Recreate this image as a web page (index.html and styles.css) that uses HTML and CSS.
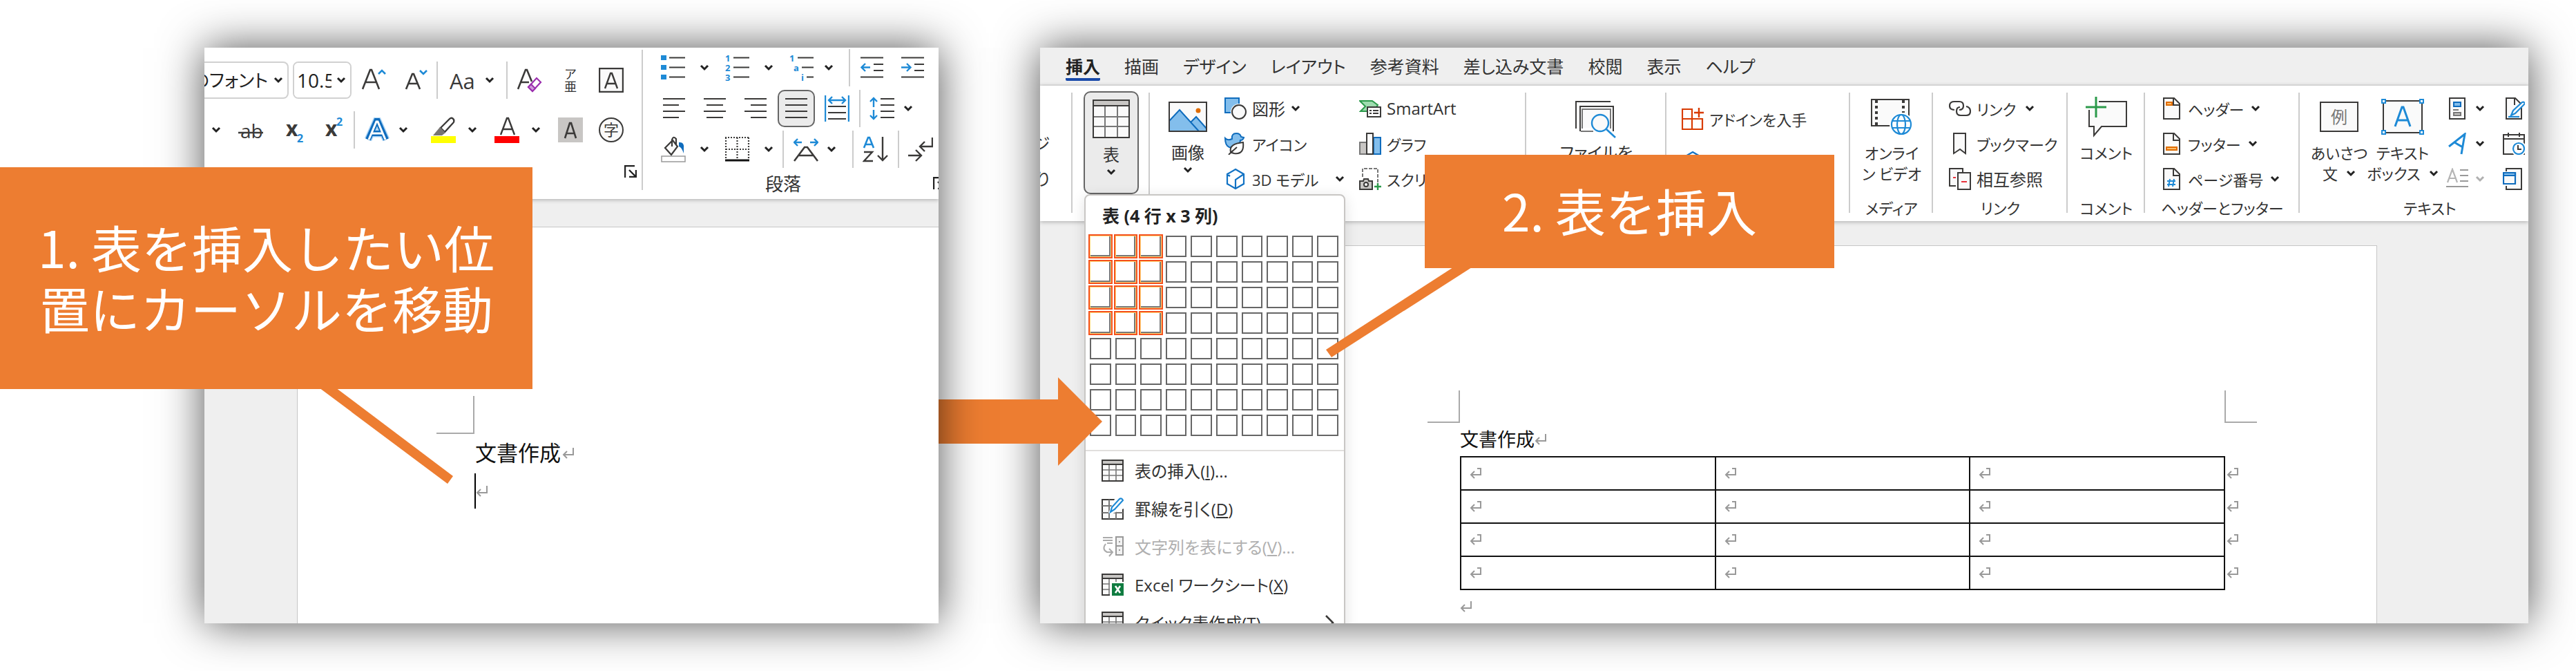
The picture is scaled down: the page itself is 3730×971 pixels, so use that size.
FILE: index.html
```html
<!DOCTYPE html>
<html lang="ja">
<head>
<meta charset="utf-8">
<title>表の挿入手順</title>
<link rel="stylesheet" href="styles.css">
</head>
<body>
<svg class="defs" aria-hidden="true">
  <symbol id="chev" viewBox="0 0 14 10"><path d="M2 2l5 5 5-5" fill="none" stroke="currentColor" stroke-width="3"/></symbol>
  <symbol id="mark" viewBox="0 0 18 18"><path d="M16 1v10H2M7 6l-5 5 5 5" fill="none" stroke="currentColor" stroke-width="2"/></symbol>
  <symbol id="cellmark" viewBox="0 0 18 18"><path d="M11 2h5v9H2M7 6l-5 5 5 5" fill="none" stroke="currentColor" stroke-width="2"/></symbol>
  <symbol id="launch" viewBox="0 0 18 18"><path d="M1 18V1h14M7 7l9 9M17 7v10H7" fill="none" stroke="#222" stroke-width="2.4"/></symbol>
  <symbol id="grid" viewBox="0 0 32 32"><path d="M1 1h30v30H1z" fill="#fafafa"/><path d="M1 1h30v6H1z" fill="#c8c6c4"/><path d="M11 7v24M21 7v24M1 15h30M1 23h30" stroke="#777" stroke-width="1.6"/><path d="M1 1h30v30H1zM1 7h30" fill="none" stroke="#3b3a39" stroke-width="2"/></symbol>
  <symbol id="page" viewBox="0 0 26 32"><path d="M1 1h15l8 8v22H1z" fill="#fafafa" stroke="#3b3a39" stroke-width="2"/><path d="M15 1v10h10" fill="none" stroke="#3b3a39" stroke-width="2"/></symbol>
</svg>

<main class="stage">
  <section class="shot shot-left">
    <div class="window">
      <div class="ribbon ribbon-home">
        <div class="font-group">
          <div class="font-row font-row-1">
            <div class="combo combo-name"><select aria-label="フォント"><option>のフォント</option></select><svg class="chev"><use href="#chev"/></svg></div>
            <div class="combo combo-size"><select aria-label="フォント サイズ"><option>10.5</option></select><svg class="chev"><use href="#chev"/></svg></div>
            <button aria-label="フォントの拡大"><svg width="36" height="36" viewBox="0 0 36 36"><path d="M1 31L12 3h2l11 28M5 21h16" fill="none" stroke="#3b3a39" stroke-width="2.6"/><path d="M24 9l5-5 5 5" fill="none" stroke="#1e8ad6" stroke-width="2.6"/></svg></button>
            <button aria-label="フォントの縮小"><svg width="36" height="36" viewBox="0 0 36 36"><path d="M3 31l9-22h2l9 22M6 23h14" fill="none" stroke="#3b3a39" stroke-width="2.6"/><path d="M23 4l5 5 5-5" fill="none" stroke="#1e8ad6" stroke-width="2.6"/></svg></button>
            <i class="sep"></i>
            <button aria-label="文字種の変換"><svg width="38" height="36" viewBox="0 0 38 36"><text x="0" y="31" font-size="31" fill="#3b3a39">Aa</text></svg><svg class="chev"><use href="#chev"/></svg></button>
            <i class="sep"></i>
            <button aria-label="書式のクリア"><svg width="36" height="36" viewBox="0 0 36 36"><path d="M1 31L12 3h2l7 17M5 21h12" fill="none" stroke="#3b3a39" stroke-width="2.6"/><path d="M16 28l6 6 12-13-6-6z" fill="#fff" stroke="#9b2fae" stroke-width="2.2"/><path d="M16 28l4-4 6 6-4 4z" fill="#cf9bdb" stroke="#9b2fae" stroke-width="2"/></svg></button>
            <button aria-label="ルビ" class="ruby"><span>ア</span><span>亜</span></button>
            <button aria-label="囲み線"><svg width="36" height="36" viewBox="0 0 36 36"><path d="M1 1h34v34H1z" fill="#fafafa" stroke="#3b3a39" stroke-width="2.4"/><path d="M9 30l8-22h2l8 22M12 23h12" fill="none" stroke="#3b3a39" stroke-width="2.4"/></svg></button>
          </div>
          <div class="font-row font-row-2">
            <button aria-label="下線の種類"><svg class="chev"><use href="#chev"/></svg></button>
            <button aria-label="取り消し線"><svg width="36" height="36" viewBox="0 0 36 36"><text x="3" y="30" font-size="28" fill="#3b3a39">ab</text><path d="M0 22h36" stroke="#3b3a39" stroke-width="2.4"/></svg></button>
            <button aria-label="下付き"><svg width="26" height="38" viewBox="0 0 26 38"><text x="0" y="28" font-size="30" font-weight="700" fill="#3b3a39">x</text><text x="16" y="37" font-size="16" font-weight="700" fill="#1e8ad6">2</text></svg></button>
            <button aria-label="上付き"><svg width="26" height="38" viewBox="0 0 26 38"><text x="0" y="28" font-size="30" font-weight="700" fill="#3b3a39">x</text><text x="16" y="13" font-size="16" font-weight="700" fill="#1e8ad6">2</text></svg></button>
            <i class="sep"></i>
            <button aria-label="文字の効果"><svg width="36" height="36" viewBox="0 0 36 36"><path d="M5 32L17 5h2l12 27M10 23h16" fill="none" stroke="#a9d3f5" stroke-width="11"/><path d="M5 32L17 5h2l12 27M10 23h16" fill="none" stroke="#0f6cbd" stroke-width="8"/><path d="M6 32L17 6h2l11 26M10 23h16" fill="none" stroke="#fff" stroke-width="3"/></svg><svg class="chev"><use href="#chev"/></svg></button>
            <button class="wide" aria-label="蛍光ペンの色"><svg width="36" height="38" viewBox="0 0 36 38"><path d="M14 16L27 3q3-3 6 1 1 3-1 5L20 22z" fill="#fff" stroke="#3b3a39" stroke-width="2.4"/><path d="M13 15l8 8-5 4H3z" fill="#777572"/><path d="M0 28h36v10H0z" fill="#ff0"/></svg><svg class="chev"><use href="#chev"/></svg></button>
            <button class="wide" aria-label="フォントの色"><svg width="36" height="38" viewBox="0 0 36 38"><path d="M9 26l9-24h2l9 24M12 18h14" fill="none" stroke="#3b3a39" stroke-width="2.4"/><path d="M0 28h36v10H0z" fill="red"/></svg><svg class="chev"><use href="#chev"/></svg></button>
            <button aria-label="文字の網かけ"><svg width="36" height="36" viewBox="0 0 36 36"><path d="M0 0h36v36H0z" fill="#c8c6c4"/><path d="M10 30l7-22h2l7 22M13 23h11" fill="none" stroke="#3b3a39" stroke-width="2.6"/></svg></button>
            <button aria-label="囲い文字"><svg width="36" height="36" viewBox="0 0 36 36"><circle cx="18" cy="18" r="17" fill="#fafafa" stroke="#3b3a39" stroke-width="2"/><text x="18" y="26" font-size="22" text-anchor="middle" fill="#3b3a39">字</text></svg></button>
          </div>
          <button class="launcher" aria-label="フォントの設定"><svg width="18" height="18"><use href="#launch"/></svg></button>
        </div>

        <div class="para-group">
          <div class="para-row para-row-1">
            <button aria-label="箇条書き"><svg width="36" height="38" viewBox="0 0 36 38"><path d="M0 1h8v7H0zM0 15h8v7H0zM0 29h8v7H0z" fill="#1e8ad6"/><path d="M12 4.500h23M12 18.500h23M12 32.500h23" stroke="#3b3a39" stroke-width="2.200"/></svg><svg class="chev"><use href="#chev"/></svg></button>
            <button aria-label="段落番号"><svg width="36" height="38" viewBox="0 0 36 38"><g font-size="13" font-weight="700" fill="#1e8ad6"><text x="0" y="10">1</text><text x="0" y="24">2</text><text x="0" y="38">3</text></g><path d="M12 4.500h23M12 18.500h23M12 32.500h23" stroke="#3b3a39" stroke-width="2.200"/></svg><svg class="chev"><use href="#chev"/></svg></button>
            <button class="snug" aria-label="アウトライン"><svg width="36" height="38" viewBox="0 0 36 38"><g font-size="13" font-weight="700" fill="#1e8ad6"><text x="0" y="10">1</text><text x="6" y="24">a</text><text x="17" y="38">i</text></g><path d="M12 4.500h23M18 18.500h17M25 32.500h10" stroke="#3b3a39" stroke-width="2.200"/></svg><svg class="chev"><use href="#chev"/></svg></button>
            <i class="sep"></i>
            <button aria-label="インデントを減らす"><svg width="34" height="38" viewBox="0 0 34 38"><path d="M0 4.500h33M19 14h14M19 23h14M0 32.500h33" stroke="#3b3a39" stroke-width="2.200"/><path d="M14 18.500H2M7 13l-5.500 5.500L7 24" fill="none" stroke="#1e8ad6" stroke-width="2.400"/></svg></button>
            <button aria-label="インデントを増やす"><svg width="34" height="38" viewBox="0 0 34 38"><path d="M0 4.500h33M19 14h14M19 23h14M0 32.500h33" stroke="#3b3a39" stroke-width="2.200"/><path d="M0 18.500h13M8 13l5.500 5.500L8 24" fill="none" stroke="#1e8ad6" stroke-width="2.400"/></svg></button>
          </div>
          <div class="para-row para-row-2">
            <button aria-label="左揃え"><svg width="36" height="34" viewBox="0 0 36 34"><path d="M3 3h32M3 12h23M3 21h32M3 30h23" stroke="#3b3a39" stroke-width="2.200"/></svg></button>
            <button aria-label="中央揃え"><svg width="36" height="34" viewBox="0 0 36 34"><path d="M3 3h32M7 12h24M3 21h32M7 30h24" stroke="#3b3a39" stroke-width="2.200"/></svg></button>
            <button aria-label="右揃え"><svg width="36" height="34" viewBox="0 0 36 34"><path d="M3 3h32M12 12h23M3 21h32M12 30h23" stroke="#3b3a39" stroke-width="2.200"/></svg></button>
            <button class="pressed" aria-label="両端揃え" aria-pressed="true"><svg width="32" height="34" viewBox="0 0 32 34"><path d="M0 3h32M0 12h32M0 21h32M0 30h32" stroke="#3b3a39" stroke-width="2.200"/></svg></button>
            <button aria-label="均等割り付け"><svg width="36" height="38" viewBox="0 0 36 38"><path d="M1 0v38M35 0v38M7 7h22M11 2L6 7l5 5M25 2l5 5-5 5" fill="none" stroke="#1e8ad6" stroke-width="2.400"/><path d="M5 16h26M5 25h26M5 34h26" stroke="#3b3a39" stroke-width="2.200"/></svg></button>
            <i class="sep"></i>
            <button class="tight" aria-label="行と段落の間隔"><svg width="37" height="36" viewBox="0 0 37 36"><path d="M6 3v13M1 8l5-5 5 5M6 20v13M1 28l5 5 5-5" fill="none" stroke="#1e8ad6" stroke-width="2.400"/><path d="M16 4h20M16 13h20M16 22h20M16 31h20" stroke="#3b3a39" stroke-width="2.200"/></svg><svg class="chev"><use href="#chev"/></svg></button>
          </div>
          <div class="para-row para-row-3">
            <button aria-label="塗りつぶし"><svg width="36" height="38" viewBox="0 0 36 38"><path d="M6 17L17 6l7 9-9 12zM16 15V5q2-6 6-1v9" fill="#fafafa" stroke="#3b3a39" stroke-width="2.200"/><path d="M26 9q8-1 7 8v8q-3-9-7-10z" fill="#0f6cbd"/><path d="M1 29h34v8H1z" fill="#fff" stroke="#999" stroke-width="1.500"/></svg><svg class="chev"><use href="#chev"/></svg></button>
            <button aria-label="罫線"><svg width="36" height="38" viewBox="0 0 36 38"><path d="M0 2h35M1 2v30M34 2v30M17.500 2v30M1 19h34" fill="none" stroke="#3b3a39" stroke-width="2.200" stroke-dasharray="2 2"/><path d="M0 35h35" stroke="#111" stroke-width="3"/></svg><svg class="chev"><use href="#chev"/></svg></button>
            <i class="sep"></i>
            <button class="tight" aria-label="拡張書式"><svg width="36" height="38" viewBox="0 0 36 38"><path d="M12 9H2M6 4L1 9l5 5M24 9h10M30 4l5 5-5 5" fill="none" stroke="#1e8ad6" stroke-width="2.400"/><path d="M1 36l15-20h4l15 20M8 28h20" fill="none" stroke="#3b3a39" stroke-width="2.600"/></svg><svg class="chev"><use href="#chev"/></svg></button>
            <i class="sep"></i>
            <button aria-label="並べ替え"><svg width="38" height="38" viewBox="0 0 38 38"><path d="M2 17L8 2h2l6 15M4 12h10" fill="none" stroke="#1e8ad6" stroke-width="2.600"/><path d="M2 23h12L2 36h13M29 1v34M22 28l7 7 7-7" fill="none" stroke="#3b3a39" stroke-width="2.400"/></svg></button>
            <i class="sep"></i>
            <button aria-label="編集記号の表示"><svg width="36" height="38" viewBox="0 0 36 38"><path d="M35 2v13H18M24 8l-7 7 7 7M0 28h18M11 20l8 8-8 8" fill="none" stroke="#3b3a39" stroke-width="2.400"/></svg></button>
          </div>
          <div class="para-foot"><span>段落</span><button class="launcher-cut" aria-label="段落の設定"><svg width="18" height="18"><use href="#launch"/></svg></button></div>
        </div>
      </div>
      <div class="desk desk-left">
        <div class="paper paper-left">
          <div class="corner"></div>
          <p class="para">文書作成<svg class="mark"><use href="#mark"/></svg></p>
          <p class="para caret"><svg class="mark"><use href="#mark"/></svg></p>
        </div>
      </div>
    </div>
    <svg class="pointer pointer-1" viewBox="0 0 200 140" aria-hidden="true"><path d="M0 0h24l170 128-8 11z" fill="#ed7d31"/></svg>
    <p class="callout callout-1">1. 表を挿入したい位置にカーソルを移動</p>
  </section>

  <section class="shot shot-right">
    <div class="window">
      <nav class="tabs">
        <a href="#" class="on">挿入</a><a href="#">描画</a><a href="#">デザイン</a><a href="#">レイアウト</a><a href="#">参考資料</a><a href="#">差し込み文書</a><a href="#">校閲</a><a href="#">表示</a><a href="#">ヘルプ</a>
      </nav>
      <div class="ribbon ribbon-insert">
        <div class="group g-cut"><span></span><span>ジ</span><span>り</span></div>
        <div class="group g-table">
          <button class="big pressed" aria-expanded="true"><span class="pic"><svg width="54" height="56" viewBox="0 0 54 56"><path d="M1 1h52v54H1z" fill="#fafafa"/><path d="M1 1h52v8H1z" fill="#c8c6c4"/><path d="M18 9v46M36 9v46M1 25h52M1 39h52" stroke="#777" stroke-width="2"/><path d="M1 1h52v54H1zM1 9h52" fill="none" stroke="#3b3a39" stroke-width="2"/></svg></span><span>表</span><svg class="chev"><use href="#chev"/></svg></button>
        </div>
        <div class="group g-figure">
          <button class="big"><span class="pic"><svg width="56" height="44" viewBox="0 0 56 44"><path d="M1 1h54v42H1z" fill="#fafafa"/><path d="M1 28l15-16 28 31H1z" fill="#83beec"/><path d="M32 30l8-8 15 17v4H45z" fill="#83beec"/><path d="M1 28l15-16 28 31M32 30l8-8 15 17" fill="none" stroke="#0f6cbd" stroke-width="2"/><circle cx="43" cy="13" r="3.500" fill="#e06c00"/><path d="M1 1h54v42H1z" fill="none" stroke="#3b3a39" stroke-width="2"/></svg></span><span>画像</span><svg class="chev"><use href="#chev"/></svg></button>
          <div class="rows rows-shape">
            <button><svg width="32" height="32" viewBox="0 0 32 32"><path d="M1 1h20v21H1z" fill="#83beec" stroke="#0f6cbd" stroke-width="2"/><circle cx="21" cy="21" r="12" fill="#fff"/><circle cx="21" cy="21" r="10" fill="#fafafa" stroke="#3b3a39" stroke-width="2"/></svg>図形<svg class="chev"><use href="#chev"/></svg></button>
            <button class="kana"><svg width="32" height="32" viewBox="0 0 32 32"><path d="M1 8q4 4 10 1Q10 1 17 1q6 0 7 5l4 1q-1 4-5 4 0 4-3 6-6 6-13 4Q1 19 1 8z" fill="#83beec" stroke="#0f6cbd" stroke-width="2"/><path d="M6 32l6-6M9 28q-3-12 18-14 2 18-13 16-4-1-5-2z" fill="#fff" stroke="#3b3a39" stroke-width="2"/><path d="M9 29l9-8" stroke="#3b3a39" stroke-width="2"/></svg>アイコン</button>
            <button class="far kana"><svg width="32" height="32" viewBox="0 0 32 32"><path d="M16 2l12 7v14l-12 7-12-7V9zM4 9l4 3M28 9l-12 8v13" fill="none" stroke="#1172c4" stroke-width="2.200"/></svg>3D モデル<svg class="chev"><use href="#chev"/></svg></button>
          </div>
          <div class="rows">
            <button><svg width="32" height="32" viewBox="0 0 32 32"><path d="M1 5h18l8 6-2 3H13v6H2l7-7z" fill="#9fdcb0" stroke="#2c9a4b" stroke-width="2"/><path d="M12 14h19v14H12z" fill="#fff" stroke="#3b3a39" stroke-width="2"/><path d="M15 19h3M20 19h8M15 23h3M20 23h8" stroke="#3b3a39" stroke-width="2"/></svg>SmartArt</button>
            <button class="kana"><svg width="32" height="32" viewBox="0 0 32 32"><path d="M1 14h10v17H1z" fill="#c8c6c4" stroke="#777" stroke-width="2"/><path d="M21 7h10v24H21z" fill="#83beec" stroke="#0f6cbd" stroke-width="2"/><path d="M11 1h9v30h-9z" fill="#fafafa" stroke="#3b3a39" stroke-width="2"/></svg>グラフ</button>
            <button class="kana"><svg width="32" height="32" viewBox="0 0 32 32"><path d="M5 13V1h22v20" fill="none" stroke="#777" stroke-width="2" stroke-dasharray="5 2"/><path d="M1 19h5l1-3h6l1 3h5v12H1z" fill="#c8c6c4" stroke="#3b3a39" stroke-width="2"/><circle cx="10" cy="24" r="3" fill="#fff" stroke="#3b3a39" stroke-width="2"/><path d="M27 22v10M22 27h10" stroke="#2c9a4b" stroke-width="2.400"/></svg>スクリーン</button>
          </div>
        </div>
        <div class="group g-file">
          <button class="big"><span class="pic"><svg width="60" height="62" viewBox="0 -8 60 62"><path d="M1 40V1h50M7 44V8h48v36" fill="none" stroke="#3b3a39" stroke-width="2"/><path d="M10 40V12h41v28M8 44h18" fill="none" stroke="#777" stroke-width="2"/><path d="M11 13h38v26H11z" fill="#fafafa"/><circle cx="36" cy="32" r="12" fill="#fafafa" stroke="#1e8ad6" stroke-width="2.400"/><path d="M45 41l13 12" stroke="#1e8ad6" stroke-width="2.600"/></svg></span><span>ファイルを</span></button>
        </div>
        <div class="group g-addin">
          <button class="kana"><svg width="32" height="32" viewBox="0 0 32 32"><path d="M1 2h14v29H1zM1 16h29v15H15" fill="none" stroke="#d83b01" stroke-width="2.200"/><path d="M25 0v14M18 7h14" stroke="#d83b01" stroke-width="2.400"/></svg>アドインを入手</button>
          <button class="kana" aria-label="個人用アドイン"><svg width="32" height="32" viewBox="0 0 32 32"><path d="M16 2l12 7v14l-12 7-12-7V9z" fill="none" stroke="#1172c4" stroke-width="2.200"/></svg></button>
        </div>
        <div class="group g-media">
          <button class="big kana"><span class="pic"><svg width="60" height="54" viewBox="0 0 60 54"><path d="M1 2h54v38H1z" fill="#fafafa" stroke="#3b3a39" stroke-width="2"/><path d="M8 3v37M47 3v18" stroke="#3b3a39" stroke-width="4" stroke-dasharray="4 4"/><circle cx="44" cy="38" r="17" fill="#fff"/><g fill="none" stroke="#1e8ad6" stroke-width="2.200"><circle cx="44" cy="38" r="14"/><ellipse cx="44" cy="38" rx="6" ry="14"/><path d="M31 33h26M31 43h26"/></g></svg></span><span>オンライ</span><span>ン ビデオ</span></button>
          <span class="label">メディア</span>
        </div>
        <div class="group g-link">
          <div class="rows">
            <button class="far kana"><svg width="32" height="32" viewBox="0 0 32 32"><g fill="none" stroke="#3b3a39" stroke-width="2.200"><path d="M8 18Q1 18 1 12t7-6h7q6 0 6 6t-6 6"/><path d="M16 14q-5 0-5 6t6 6h8q6 0 6-6t-6-7"/></g></svg>リンク<svg class="chev"><use href="#chev"/></svg></button>
            <button class="kana"><svg width="32" height="32" viewBox="0 0 32 32"><path d="M7 1h17v29l-8-6-9 6z" fill="#fafafa" stroke="#3b3a39" stroke-width="2"/></svg>ブックマーク</button>
            <button><svg width="32" height="32" viewBox="0 0 32 32"><path d="M10 26H1V1h19v5" fill="#fafafa" stroke="#3b3a39" stroke-width="2"/><path d="M13 7h18v24H13z" fill="#fafafa" stroke="#3b3a39" stroke-width="2"/><path d="M6 14h4M18 20h8" stroke="#e8323c" stroke-width="2.200"/></svg>相互参照</button>
          </div>
          <span class="label">リンク</span>
        </div>
        <div class="group g-comment">
          <button class="big kana"><span class="pic"><svg width="60" height="60" viewBox="0 0 60 60"><path d="M5 8h54v36H23L12 57V44H5z" fill="#fafafa" stroke="#3b3a39" stroke-width="2"/><path d="M0 0h19v20H0z" fill="#fff"/><path d="M15 1v30M0 16h30" stroke="#2c9a4b" stroke-width="3"/></svg></span><span>コメント</span></button>
          <span class="label">コメント</span>
        </div>
        <div class="group g-header">
          <div class="rows">
            <button class="kana"><svg width="26" height="32" viewBox="0 0 26 32"><use href="#page"/><path d="M5 7h8v4H5z" fill="#fbbc6a" stroke="#e06c00" stroke-width="2"/></svg>ヘッダー<svg class="chev"><use href="#chev"/></svg></button>
            <button class="kana"><svg width="26" height="32" viewBox="0 0 26 32"><use href="#page"/><path d="M5 21h15v4H5z" fill="#fbbc6a" stroke="#e06c00" stroke-width="2"/></svg>フッター<svg class="chev"><use href="#chev"/></svg></button>
            <button class="kana"><svg width="26" height="32" viewBox="0 0 26 32"><use href="#page"/><path d="M10 16l-2 11M16 16l-2 11M6 19h12M6 24h12" stroke="#1e8ad6" stroke-width="2"/></svg>ページ番号<svg class="chev"><use href="#chev"/></svg></button>
          </div>
          <span class="label">ヘッダーとフッター</span>
        </div>
        <div class="group g-text">
          <div class="text-body">
            <button class="big kana"><span class="pic"><svg width="56" height="44" viewBox="0 0 56 44"><path d="M1 1h54v42H1z" fill="#fafafa" stroke="#3b3a39" stroke-width="2"/><text x="28" y="31" font-size="24" text-anchor="middle" fill="#777">例</text></svg></span><span>あいさつ</span><span>文 <svg class="chev"><use href="#chev"/></svg></span></button>
            <button class="big kana"><span class="pic"><svg width="62" height="52" viewBox="0 0 62 52"><path d="M3 3h56v46H3z" fill="#fafafa" stroke="#3b3a39" stroke-width="2"/><path d="M20 40l10-28h2l10 28M24 31h14" fill="none" stroke="#1e8ad6" stroke-width="3"/><path d="M1 1h5v5H1zM56 1h5v5h-5zM1 46h5v5H1zM56 46h5v5h-5z" fill="#fff" stroke="#1e8ad6" stroke-width="2"/></svg></span><span>テキスト</span><span>ボックス <svg class="chev"><use href="#chev"/></svg></span></button>
            <div class="rows">
              <button aria-label="クイック パーツ"><svg width="32" height="32" viewBox="0 0 32 32"><path d="M5 1h22v30H5z" fill="#fafafa" stroke="#3b3a39" stroke-width="2"/><path d="M11 7h10v6H11z" fill="#83beec" stroke="#0f6cbd" stroke-width="2"/><path d="M10 18h8" stroke="#777" stroke-width="2"/><path d="M11 22h10v4H11z" fill="#c8c6c4" stroke="#777" stroke-width="2"/></svg><svg class="chev"><use href="#chev"/></svg></button>
              <button aria-label="ワードアート"><svg width="32" height="32" viewBox="0 0 32 32"><path d="M4 20L27 2l-5 29M12 14l12 7" fill="none" stroke="#1e8ad6" stroke-width="3"/></svg><svg class="chev"><use href="#chev"/></svg></button>
              <button aria-label="ドロップ キャップ" disabled><svg width="32" height="32" viewBox="0 0 32 32"><path d="M2 21L9 2l7 19M4 15h10" fill="none" stroke="#b5b5b5" stroke-width="2.200"/><path d="M20 3h12M20 11h12M20 19h12M0 27h32" stroke="#999" stroke-width="2.200"/></svg><svg class="chev"><use href="#chev"/></svg></button>
            </div>
            <div class="rows">
              <button aria-label="署名欄"><svg width="32" height="32" viewBox="0 0 32 32"><path d="M5 1h13l9 9v21H5zM17 1v10" fill="#fafafa" stroke="#3b3a39" stroke-width="2"/><path d="M12 26l3-7L28 7q3-1 4 2L18 23z" fill="#fff" stroke="#1e8ad6" stroke-width="2.200"/><path d="M8 28h16" stroke="#1e8ad6" stroke-width="2.200"/></svg></button>
              <button aria-label="日付と時刻"><svg width="32" height="32" viewBox="0 0 32 32"><path d="M1 3h30v28H1zM1 9h30M8 0v6M24 0v6" fill="#fafafa" stroke="#3b3a39" stroke-width="2"/><circle cx="23" cy="23" r="11" fill="#fff"/><circle cx="23" cy="23" r="8" fill="#fff" stroke="#1e8ad6" stroke-width="2.200"/><path d="M22 18v6h5" fill="none" stroke="#3b3a39" stroke-width="2"/></svg></button>
              <button aria-label="オブジェクト"><svg width="32" height="32" viewBox="0 0 32 32"><path d="M5 5V1h22v30H5v-5" fill="#fafafa" stroke="#3b3a39" stroke-width="2"/><path d="M1 7h17v16H1z" fill="#fafafa" stroke="#0f6cbd" stroke-width="2.200"/><path d="M1 7h17v4H1z" fill="#83beec" stroke="#0f6cbd" stroke-width="2.200"/></svg></button>
            </div>
          </div>
          <span class="label">テキスト</span>
        </div>
      </div>
      <div class="desk desk-right">
        <div class="paper paper-right">
          <div class="corners"><div class="corner"></div><div class="corner corner-r"></div></div>
          <p class="para">文書作成<svg class="mark"><use href="#mark"/></svg></p>
          <table class="doc-table">
            <tr><td><svg class="mark"><use href="#cellmark"/></svg></td><td><svg class="mark"><use href="#cellmark"/></svg></td><td><svg class="mark"><use href="#cellmark"/></svg></td><td class="end"><svg class="mark"><use href="#cellmark"/></svg></td></tr>
            <tr><td><svg class="mark"><use href="#cellmark"/></svg></td><td><svg class="mark"><use href="#cellmark"/></svg></td><td><svg class="mark"><use href="#cellmark"/></svg></td><td class="end"><svg class="mark"><use href="#cellmark"/></svg></td></tr>
            <tr><td><svg class="mark"><use href="#cellmark"/></svg></td><td><svg class="mark"><use href="#cellmark"/></svg></td><td><svg class="mark"><use href="#cellmark"/></svg></td><td class="end"><svg class="mark"><use href="#cellmark"/></svg></td></tr>
            <tr><td><svg class="mark"><use href="#cellmark"/></svg></td><td><svg class="mark"><use href="#cellmark"/></svg></td><td><svg class="mark"><use href="#cellmark"/></svg></td><td class="end"><svg class="mark"><use href="#cellmark"/></svg></td></tr>
          </table>
          <p class="para"><svg class="mark"><use href="#mark"/></svg></p>
        </div>
      </div>

      <div class="menu">
        <h2>表 (4 行 x 3 列)</h2>
        <div class="cells">
          <i class="hot"></i><i class="hot"></i><i class="hot"></i><i></i><i></i><i></i><i></i><i></i><i></i><i></i>
          <i class="hot"></i><i class="hot"></i><i class="hot"></i><i></i><i></i><i></i><i></i><i></i><i></i><i></i>
          <i class="hot"></i><i class="hot"></i><i class="hot"></i><i></i><i></i><i></i><i></i><i></i><i></i><i></i>
          <i class="hot"></i><i class="hot"></i><i class="hot"></i><i></i><i></i><i></i><i></i><i></i><i></i><i></i>
          <i></i><i></i><i></i><i></i><i></i><i></i><i></i><i></i><i></i><i></i>
          <i></i><i></i><i></i><i></i><i></i><i></i><i></i><i></i><i></i><i></i>
          <i></i><i></i><i></i><i></i><i></i><i></i><i></i><i></i><i></i><i></i>
          <i></i><i></i><i></i><i></i><i></i><i></i><i></i><i></i><i></i><i></i>
        </div>
        <div class="commands">
          <button><svg width="32" height="32"><use href="#grid"/></svg><span>表の挿入(<u>I</u>)...</span></button>
          <button><svg width="32" height="32" viewBox="0 0 32 32"><path d="M1 3h30v28H1z" fill="#fafafa" stroke="#3b3a39" stroke-width="2"/><path d="M11 3v28M21 16v15M1 12h17M1 22h30" stroke="#777" stroke-width="2"/><path d="M20 0h12v16L14 24l-4-2z" fill="#fff"/><path d="M13 21l2-7L26 2q3-2 5 2L19 17z" fill="#fff" stroke="#1e8ad6" stroke-width="2.200"/></svg><span>罫線を引く(<u>D</u>)</span></button>
          <button disabled><svg width="32" height="32" viewBox="0 0 32 32"><path d="M2 3h14M2 7h14M8 11h8" stroke="#aaa" stroke-width="2"/><path d="M6 12q-6 8 2 12h7M11 19l5 5-5 6" fill="none" stroke="#aaa" stroke-width="2"/><path d="M21 2h10v26H21zM21 15h10M25 9h2M25 21h2" fill="#f2f2f2" stroke="#999" stroke-width="2"/></svg><span>文字列を表にする(<u>V</u>)...</span></button>
          <button><svg width="32" height="32" viewBox="0 0 32 32"><use href="#grid"/><path d="M12 12h20v20H12z" fill="#fff"/><path d="M15 14h17v18H15z" fill="#107c41"/><path d="M20 18l7 10M27 18l-7 10" stroke="#fff" stroke-width="2.600"/></svg><span>Excel ワークシート(<u>X</u>)</span></button>
          <button><svg width="32" height="32"><use href="#grid"/></svg><span>クイック表作成(<u>T</u>)</span><svg class="more" width="14" height="24" viewBox="0 0 14 24"><path d="M2 2l10 10L2 22" fill="none" stroke="#3b3a39" stroke-width="2.600"/></svg></button>
        </div>
      </div>
    </div>
    <svg class="arrow" viewBox="0 0 237 128" aria-hidden="true"><path d="M0 32h173V0l64 64-64 64V96H0z" fill="#ed7d31"/></svg>
    <svg class="pointer pointer-2" viewBox="0 0 212 130" aria-hidden="true"><path d="M184 0h27L8 130l-8-11z" fill="#ed7d31"/></svg>
    <p class="callout callout-2">2. 表を挿入</p>
  </section>
</main>
</body>
</html>
```
FILE: styles.css
```css
* { box-sizing: border-box; }
body {
  margin: 0;
  background: #fff;
  color: #333;
  font-family: "Open Sans", "Noto Sans CJK JP", sans-serif;
  font-size: 24px;
  font-feature-settings: "palt";
}
p, h2 { margin: 0; }
svg { display: block; flex: none; }
.defs { position: absolute; width: 0; height: 0; }
button {
  display: flex;
  align-items: center;
  margin: 0;
  padding: 0;
  border: 0;
  background: none;
  color: inherit;
  font: inherit;
  font-feature-settings: inherit;
  white-space: nowrap;
}
button:disabled { color: #b0b0b0; }
.kana { font-size: 22px; }
.chev { width: 14px; height: 10px; color: #222; }
button:disabled .chev { color: #b0b0b0; }

/* Stage */
.stage {
  display: grid;
  grid-template-columns: minmax(0, 1063fr) minmax(0, 2155fr);
  column-gap: 147px;
  min-height: 100vh;
  padding: 69px 69px 69px 296px;
  overflow: hidden;
}
.shot { position: relative; }
.shot-left { z-index: 2; }
.shot-right { z-index: 1; }
.window {
  position: relative;
  display: flex;
  flex-direction: column;
  height: calc(100vh - 138px);
  overflow: hidden;
  background: #efefef;
  box-shadow: 0 0 60px rgba(0, 0, 0, .68);
}
.ribbon {
  display: flex;
  position: relative;
  background: #fff;
  box-shadow: 0 1px 6px rgba(0, 0, 0, .3);
}

/* Home ribbon */
.ribbon-home { flex: 0 0 219px; }
.font-group {
  flex: 0 0 635px;
  padding-top: 20px;
  background: linear-gradient(#ccc, #ccc) right 3px / 2px 203px no-repeat;
}
.font-row { display: grid; height: 54px; margin-bottom: 18px; }
.font-row-1 { grid-template-columns: 128px 85px 66px 56px 4px 97px 4px 62px 56px 62px; }
.font-row-2 { grid-template-columns: 34px 66px 61px 54px 4px 89px 107px 76px 78px 40px; }
.font-row button { justify-content: center; gap: 13px; }
.font-row .wide { gap: 17px; }
.sep { display: block; width: 2px; margin: 0 auto; background: #ccc; }
.para-row .sep { margin: 0; }
.combo {
  display: flex;
  align-items: center;
  position: relative;
  overflow: hidden;
  border: 2px solid #d1d1d1;
  border-radius: 8px;
}
.combo-name { margin-right: 6px; border-left: 0; border-radius: 0 8px 8px 0; }
.combo select {
  appearance: none;
  width: 100%;
  height: 100%;
  border: 0;
  background: #fff;
  color: #222;
  font: inherit;
  font-feature-settings: inherit;
}
.combo-name select { flex: 0 0 172px; margin-left: -58px; padding: 0 0 0 40px; font-size: 26px; }
.combo-size select { padding: 0 27px 0 4px; font-size: 28px; }
.combo .chev { position: absolute; right: 6px; }
.font-row .ruby {
  flex-direction: column;
  gap: 0;
  font-size: 18px;
  line-height: 18px;
}
.launcher { margin: 24px 9px 0 auto; }

.para-group { flex: 1 1 0; min-width: 0; padding: 2px 0 0 26px; }
.para-row { display: grid; height: 54px; margin-bottom: 5px; }
.para-row-1 { grid-template-columns: 93px 93px 86px 17px 59px 54px; }
.para-row-2 { grid-template-columns: 59px 59px 51px 68px 50px 15px 100px; }
.para-row-3 { grid-template-columns: 93px 83px 16px 85px 15px 51px 15px 44px; }
.para-row button { gap: 20px; }
.para-row .snug { gap: 14px; }
.para-row .tight { gap: 12px; }
.para-row .pressed { width: 54px; justify-content: center; }
.pressed { border: 2px solid #666; border-radius: 10px; background: #ebebeb; }
.para-foot {
  display: flex;
  justify-content: space-between;
  align-items: center;
  height: 34px;
  padding-left: 151px;
  font-size: 26px;
}
.launcher-cut { margin-right: -10px; }

/* Insert ribbon */
.tabs {
  display: flex;
  flex: 0 0 54px;
  gap: 35px;
  padding: 6px 0 5px 37px;
  border-bottom: 2px solid #e6e6e6;
  font-size: 25px;
}
.tabs a {
  height: 42px;
  color: #333;
  line-height: 42px;
  text-decoration: none;
  white-space: nowrap;
}
.tabs .on { border-bottom: 4px solid #1849a9; border-radius: 2px; color: #222; font-weight: 700; }
.ribbon-insert { flex: 0 0 196px; }
.group {
  display: flex;
  flex-direction: column;
  min-width: 0;
  padding-top: 7px;
  background: linear-gradient(#ccc, #ccc) right 10px / 2px 174px no-repeat;
}
.g-cut {
  flex: 0 0 47px;
  align-items: flex-start;
  padding-right: 33px;
  direction: rtl;
  overflow: hidden;
}
.g-cut span { height: 51px; line-height: 51px; }
.g-table { flex: 0 0 112px; padding: 8px 16px 0; }
.g-figure { flex: 0 0 545px; flex-direction: row; padding-left: 27px; }
.g-file { flex: 0 0 203px; align-items: center; }
.g-addin { flex: 0 0 266px; padding: 17px 0 0 22px; }
.g-addin button { height: 62px; gap: 8px; }
.g-media { flex: 0 0 120px; }
.g-link { flex: 0 0 195px; }
.g-comment { flex: 0 0 112px; }
.g-header { flex: 0 0 224px; }
.g-text { flex: 1 1 0; background: none; }
.g-link .rows { padding-left: 23px; }
.g-header .rows { padding-left: 26px; }
.g-link .rows, .g-header .rows, .g-media .big, .g-comment .big, .text-body { height: 153px; }
.label {
  height: 34px;
  font-size: 22px;
  line-height: 34px;
  text-align: center;
  white-space: nowrap;
}
.g-text .label { padding-left: 46px; }
.big { flex-direction: column; line-height: 30px; }
.big .pic { display: flex; align-items: center; justify-content: center; height: 75px; }
.big > span:not(.pic) { display: flex; align-items: center; gap: 12px; }
.big > .chev { margin-top: 5px; }
.g-table .big { height: 149px; }
.g-figure > .big { width: 56px; margin-right: 25px; }
.rows { display: flex; flex-direction: column; }
.rows button { height: 51px; gap: 8px; }
.rows-shape { width: 174px; margin-right: 21px; }
.rows .far .chev { margin-left: auto; }
.g-link .far { width: 124px; }
.g-header .rows button { gap: 10px; }
.text-body { display: flex; padding-left: 16px; }
.text-body .big { width: 82px; margin-right: 10px; }
.text-body .big + .big { margin-right: 22px; }
.text-body .rows button { gap: 10px; }
.text-body .rows + .rows { margin-left: 26px; }

/* Documents */
.desk { flex: 1 1 0; min-height: 0; display: flex; }
.desk-left { padding: 40px 0 0 134px; }
.desk-right { padding: 35px 219px 0 400px; }
.paper {
  flex: 1 1 0;
  min-width: 0;
  border: 1px solid #c6c6c6;
  border-bottom: 0;
  background: #fff;
  color: #111;
}
.paper-left { padding: 244px 0 0 201px; border-right: 0; font-size: 31px; }
.paper-right { padding: 209px 173px 0 160px; font-size: 27px; }
.corner {
  width: 55px;
  height: 55px;
  border: solid #aaa;
  border-width: 0 2px 2px 0;
}
.corners { display: flex; justify-content: space-between; }
.corners .corner { width: 47px; height: 47px; }
.corners .corner-r { border-width: 0 0 2px 2px; }
.para {
  display: flex;
  align-items: center;
  gap: 2px;
  height: 55px;
  margin-left: 56px;
  line-height: 55px;
}
.paper-right .para { gap: 0; height: 48px; margin-left: 47px; line-height: 48px; }
.caret { height: 51px; margin: 2px 0 0 55px; border-left: 2px solid #000; }
.mark { width: 18px; height: 18px; color: #999; }
.doc-table {
  width: calc(100% - 68px);
  margin: 0 0 0 47px;
  border-collapse: collapse;
  table-layout: fixed;
}
.doc-table td { height: 48px; padding: 0 0 0 12px; border: 2px solid #111; }
.doc-table .end { width: 26px; padding: 0 0 0 2px; border-width: 0 0 0 2px; }

/* Table menu */
.menu {
  position: absolute;
  left: 64px;
  top: 212px;
  width: 378px;
  border: 2px solid #c8c6c4;
  border-radius: 8px;
  background: #fff;
  box-shadow: 0 4px 20px rgba(0, 0, 0, .12);
}
.menu h2 {
  height: 58px;
  padding-left: 24px;
  color: #222;
  font-size: 25px;
  line-height: 58px;
}
.cells {
  display: grid;
  grid-template-columns: repeat(10, 1fr);
  grid-auto-rows: 31px;
  gap: 6px;
  margin-bottom: 20px;
  padding: 0 8px 0 6px;
}
.cells i { border: 2px solid #666; }
.cells .hot {
  margin: -2px;
  border-color: #f4511e;
  box-shadow: inset 0 0 0 1px #ffd97a, inset -2px -2px 0 1px #777;
}
.commands { border-top: 2px solid #e1dfdd; }
.commands button { width: 100%; height: 55px; padding: 0 14px 0 23px; gap: 16px; }
.more { margin-left: auto; }

/* Annotations */
.callout {
  position: absolute;
  display: flex;
  align-items: center;
  justify-content: center;
  background: #ed7d31;
  color: #fff;
  font-size: 73px;
  line-height: 88px;
  font-family: "Noto Sans CJK JP", sans-serif;
  font-feature-settings: normal;
  text-align: center;
}
.callout-1 { left: -296px; top: 173px; width: 771px; height: 321px; padding: 0 40px 6px; }
.callout-2 { left: 557px; top: 155px; width: 593px; height: 164px; padding-bottom: 6px; }
.pointer, .arrow { position: absolute; }
.pointer-1 { left: 166px; top: 492px; width: 200px; height: 140px; }
.pointer-2 { left: 414px; top: 318px; width: 212px; height: 130px; }
.arrow { left: -147px; top: 477px; width: 237px; height: 128px; }
```
